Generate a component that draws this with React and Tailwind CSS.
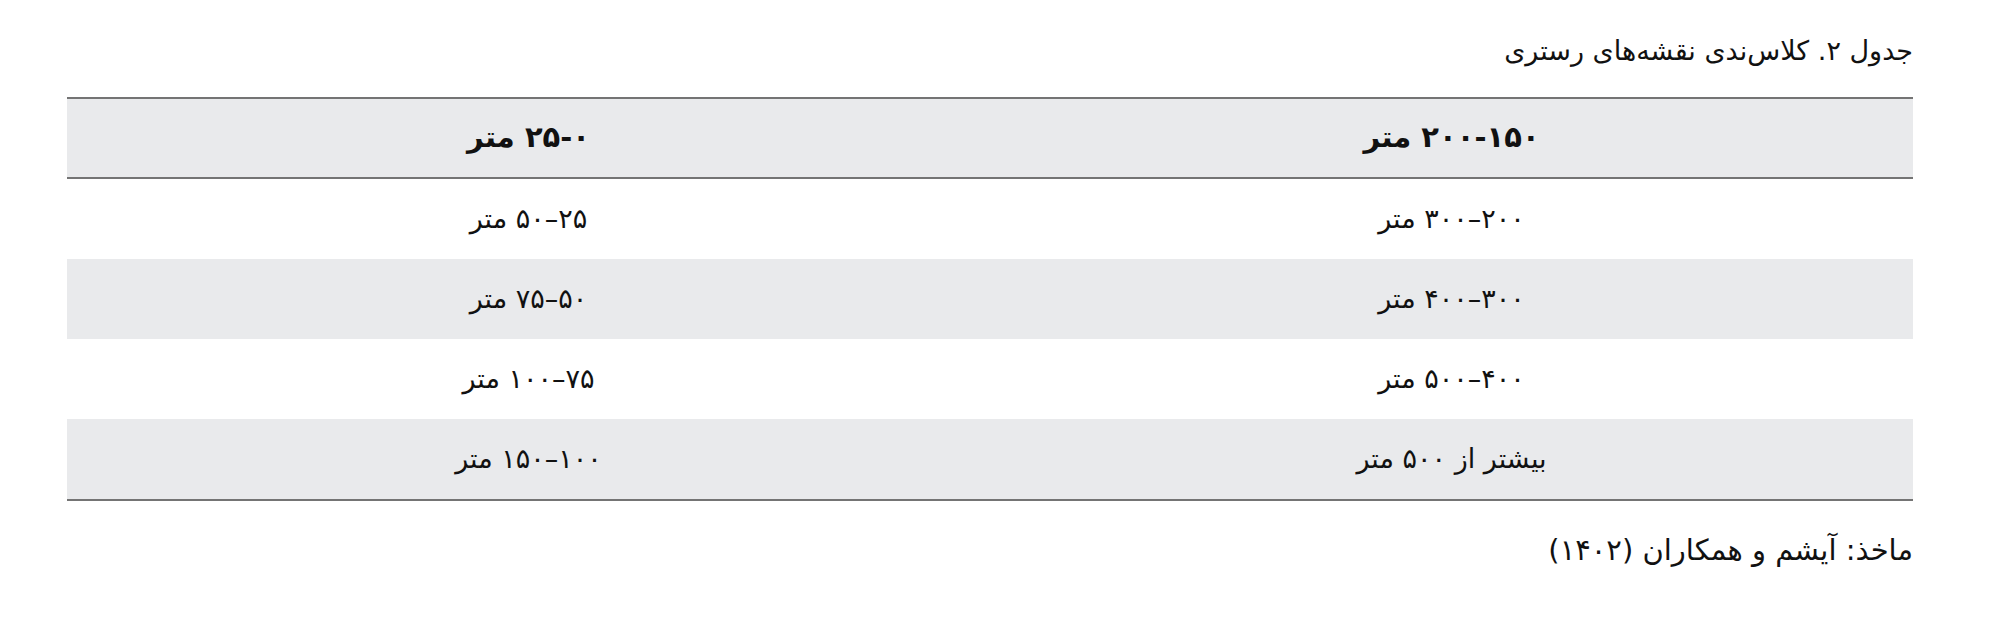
const rows = [
  { right: "۲۰۰–۳۰۰ متر", left: "۲۵–۵۰ متر", shaded: false },
  { right: "۳۰۰–۴۰۰ متر", left: "۵۰–۷۵ متر", shaded: true },
  { right: "۴۰۰–۵۰۰ متر", left: "۷۵–۱۰۰ متر", shaded: false },
  { right: "بیشتر از ۵۰۰ متر", left: "۱۰۰–۱۵۰ متر", shaded: true },
];

function Row({ right, left, shaded }) {
  return (
    <div className={`grid grid-cols-2 h-[80px] items-center ${shaded ? "bg-[#e9eaec]" : "bg-white"}`}>
      <div className="text-center">{right}</div>
      <div className="text-center">{left}</div>
    </div>
  );
}

export default function App() {
  return (
    <div
      dir="rtl"
      className="min-h-screen bg-white text-[#111] pl-[87px] pr-[87px] pt-[32px]"
      style={{ fontFamily: '"DejaVu Sans", sans-serif' }}
    >
      <div className="w-[1846px]">
        {/* Caption */}
        <p className="text-[27px] leading-[38px] h-[65px]">جدول ۲. کلاس‌ندی نقشه‌های رستری</p>

        {/* Table */}
        <div className="border-y-2 border-[#747474] text-[27px]">
          <div className="grid grid-cols-2 h-[80px] items-center bg-[#e9eaec] border-b-2 border-[#747474] font-bold text-[29px]">
            <div className="text-center">۱۵۰‐۲۰۰ متر</div>
            <div className="text-center">۰‐۲۵ متر</div>
          </div>
          {rows.map((r, i) => (
            <Row key={i} {...r} />
          ))}
        </div>

        {/* Source */}
        <p className="text-[29px] leading-[42px] mt-[28px]">ماخذ: آیشم و همکاران (۱۴۰۲)</p>
      </div>
    </div>
  );
}
